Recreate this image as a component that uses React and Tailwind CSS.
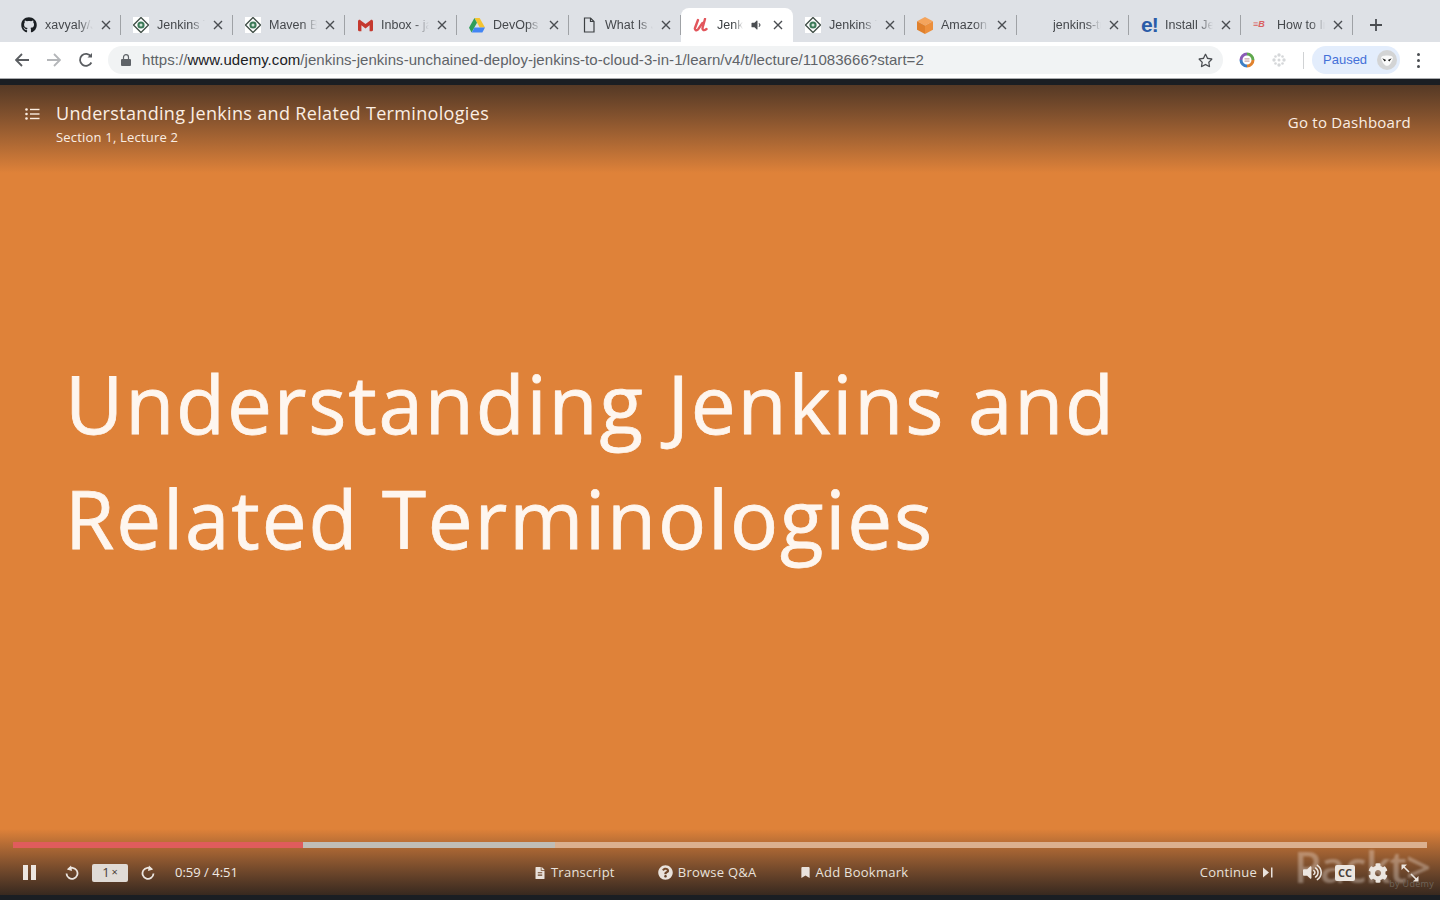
import { FaGithub, FaVolumeDown, FaVolumeUp, FaFileAlt, FaQuestionCircle, FaBookmark, FaCog, FaRegStar } from 'react-icons/fa';
import { SiGmail } from 'react-icons/si';

function JenkinsIcon() {
  return (
    <svg width="16" height="16" viewBox="0 0 16 16" className="bg-white">
      <path d="M8 .5 15.500 8 8 15.500.5 8Z" fill="none" stroke="#44524a" strokeWidth="1.400" />
      <circle cx="8" cy="8" r="3.600" fill="#3d7a58" />
      <circle cx="8" cy="8" r="1.500" fill="#cfe3d6" />
    </svg>
  );
}

function DriveIcon() {
  return (
    <svg width="16" height="15" viewBox="0 0 16 15">
      <path d="M5.400 0h5.200l5.400 9.600h-5.200Z" fill="#f4c430" />
      <path d="M5.400 0 8 4.800 2.600 14.600 0 9.800Z" fill="#2f9e58" />
      <path d="M5.400 9.600H16l-2.600 5H2.800Z" fill="#4285f4" />
    </svg>
  );
}

function PageIcon() {
  return (
    <svg width="16" height="16" viewBox="0 0 16 16" fill="none" stroke="#3c4043" strokeWidth="1.200">
      <path d="M3.500 1h6l3.500 3.500V15h-9.500Z" />
      <path d="M9.500 1v3.500H13" />
    </svg>
  );
}

function UdemyIcon() {
  return (
    <svg width="16" height="14" viewBox="0 0 16 14" fill="none" stroke="#e2565c" strokeWidth="2.400" strokeLinecap="round">
      <path d="M5 2 2 10c-.6 2 1.600 3 3 1.500L9.500 5" />
      <path d="M12 1 9.500 10c-.3 2 1.500 3 4 1" />
    </svg>
  );
}

function AmazonIcon() {
  return (
    <svg width="16" height="17" viewBox="0 0 16 17">
      <path d="M8 0 16 4.200 8 8.400 0 4.200Z" fill="#f4a45c" />
      <path d="M0 4.200 8 8.400V17L0 12.800Z" fill="#e0802c" />
      <path d="M16 4.200 8 8.400V17l8-4.200Z" fill="#ec8f3c" />
    </svg>
  );
}

const tabs = [
  { title: 'xavyaly/Jenkins', icon: <FaGithub size={16} className="text-[#1b1f23]" /> },
  { title: 'Jenkins Tutorial', icon: <JenkinsIcon /> },
  { title: 'Maven Build', icon: <JenkinsIcon /> },
  { title: 'Inbox - jane', icon: <SiGmail size={15} className="text-[#c5392f]" /> },
  { title: 'DevOps Folder', icon: <DriveIcon /> },
  { title: 'What Is Jenkins', icon: <PageIcon /> },
  { title: 'Jenkins Unchained', icon: <UdemyIcon />, active: true },
  { title: 'Jenkins Tutorial', icon: <JenkinsIcon /> },
  { title: 'Amazon Web', icon: <AmazonIcon /> },
  { title: 'jenkins-tutorial', icon: <span className="w-4" /> },
  { title: 'Install Jenkins', icon: <span className="w-4 text-[21px] leading-4 font-bold text-[#2a5ca8] tracking-[-1px]">e!</span> },
  { title: 'How to Install', icon: <span className="w-4 whitespace-nowrap text-[9px] font-bold italic text-[#d9605f]">≡B</span> },
];

function CloseIcon() {
  return (
    <svg width="10" height="10" viewBox="0 0 10 10" stroke="currentColor" strokeWidth="1.400">
      <path d="M1 1l8 8M9 1l-8 8" />
    </svg>
  );
}

function Tab({ tab }) {
  if (tab.active) {
    return (
      <div className="flex h-[34px] w-[112px] items-center rounded-t-lg bg-white pl-3 pr-[10px]">
        {tab.icon}
        <span className="ml-[8px] w-[26px] overflow-hidden whitespace-nowrap text-[12.500px] text-[#3c4043] [mask-image:linear-gradient(to_right,black_65%,transparent)]">
          {tab.title}
        </span>
        <FaVolumeDown size={12} className="ml-[7px] text-[#4a4d51]" />
        <span className="ml-auto text-[#4a4d51]"><CloseIcon /></span>
      </div>
    );
  }
  return (
    <div className="relative flex h-[34px] w-[112px] items-center pl-3 pr-[10px]">
      <span className="flex w-4 shrink-0 justify-center">{tab.icon}</span>
      <span className="ml-[8px] w-[48px] overflow-hidden whitespace-nowrap text-[12.500px] text-[#45484c] [mask-image:linear-gradient(to_right,black_70%,transparent)]">
        {tab.title}
      </span>
      <span className="ml-auto text-[#4a4d51]"><CloseIcon /></span>
      <span className="absolute right-0 top-[7px] h-5 w-px bg-[#9fa2a6]" />
    </div>
  );
}

function ControlLink({ icon, label }) {
  return (
    <div className="flex items-center gap-[5px] text-[13px] font-medium tracking-[.25px] text-[#e9e2dc]">
      {icon}
      <span>{label}</span>
    </div>
  );
}

export default function App() {
  return (
    <div className="flex h-screen w-full flex-col overflow-hidden bg-[#1a1e23] font-['Liberation_Sans',sans-serif]">
      {/* tab strip */}
      <div className="flex h-[42px] items-end bg-[#dee1e6] pl-[9px]">
        {tabs.map((tab, i) => (
          <Tab key={i} tab={tab} />
        ))}
        <svg width="12" height="12" viewBox="0 0 12 12" stroke="#4a4d51" strokeWidth="1.800" className="mb-[11px] ml-[17px]">
          <path d="M6 0v12M0 6h12" />
        </svg>
      </div>

      {/* toolbar */}
      <div className="flex h-[37px] items-center border-b border-[#a9abae] bg-white pl-[15px] pr-4">
        <svg width="14" height="14" viewBox="0 0 14 14" fill="none" stroke="#5a5d61" strokeWidth="1.800">
          <path d="M14 7H1.500M7 1 1 7l6 6" />
        </svg>
        <svg width="14" height="14" viewBox="0 0 14 14" fill="none" stroke="#b4b6b9" strokeWidth="1.800" className="ml-[18px]">
          <path d="M0 7h12.500M7 1l6 6-6 6" />
        </svg>
        <svg width="16" height="16" viewBox="0 0 16 16" fill="none" stroke="#5a5d61" strokeWidth="1.800" className="ml-[17px]">
          <path d="M13.400 10.500A6 6 0 1 1 13 4.500" />
          <path d="M14 1v4.500H9.500" fill="#5a5d61" stroke="none" />
        </svg>
        <div className="ml-[14px] flex h-7 w-[1115px] items-center rounded-full bg-[#f1f3f4] pl-[13px] pr-[10px]">
          <svg width="10" height="12" viewBox="0 0 10 12" fill="#5f6368">
            <rect y="5" width="10" height="7" rx="1" />
            <path d="M2.500 5V3.200a2.500 2.500 0 0 1 5 0V5" fill="none" stroke="#5f6368" strokeWidth="1.200" />
          </svg>
          <span className="ml-[11px] whitespace-nowrap text-[15px] tracking-[.05px] text-[#5f6368]">
            https://<span className="text-[#202124]">www.udemy.com</span>/jenkins-jenkins-unchained-deploy-jenkins-to-cloud-3-in-1/learn/v4/t/lecture/11083666?start=2
          </span>
          <FaRegStar size={15} className="ml-auto text-[#4a4d51]" />
        </div>
        <span className="ml-4 flex h-4 w-4 items-center justify-center">
          <svg width="16" height="16" viewBox="0 0 16 16" fill="none" strokeWidth="3">
            <path d="M2 8a6 6 0 0 1 6-6" stroke="#8a5bb5" />
            <path d="M8 2a6 6 0 0 1 6 6" stroke="#5fa84d" />
            <path d="M14 8a6 6 0 0 1-6 6" stroke="#e0822d" />
            <path d="M8 14a6 6 0 0 1-6-6" stroke="#3f7fc4" />
            <path d="M5.500 6.800h5M5.500 9.200h5" stroke="#c9a6a6" strokeWidth="1.300" />
          </svg>
        </span>
        <svg width="14" height="14" viewBox="0 0 14 14" fill="#d5d7d9" className="ml-[17px]">
          <circle cx="7" cy="2" r="1.700" /><circle cx="7" cy="12" r="1.700" /><circle cx="2" cy="7" r="1.700" /><circle cx="12" cy="7" r="1.700" />
          <circle cx="3.500" cy="3.500" r="1.300" /><circle cx="10.500" cy="3.500" r="1.300" /><circle cx="3.500" cy="10.500" r="1.300" /><circle cx="10.500" cy="10.500" r="1.300" />
          <circle cx="7" cy="7" r="1.500" />
        </svg>
        <span className="ml-[17px] h-[17px] w-px bg-[#d0d2d4]" />
        <div className="ml-2 flex h-7 w-[88px] shrink-0 items-center rounded-full bg-[#e3edfc] pl-[11px]">
          <span className="text-[13px] text-[#4470d8]">Paused</span>
          <span className="ml-[10px] flex h-5 w-5 items-center justify-center rounded-full bg-[#d3d4d5]">
            <svg width="14" height="14" viewBox="0 0 12 12">
              <path d="M1 4c0-2.500 10-2.500 10 0 0 3-3 7-5 7S1 7 1 4Z" fill="#fafafa" />
              <path d="M2 4.500l3.200 1.500-1.200 1.200ZM10 4.500 6.800 6l1.200 1.200Z" fill="#111" />
            </svg>
          </span>
        </div>
        <div className="ml-[17px] flex flex-col gap-[3px]">
          <span className="h-[3px] w-[3px] rounded-full bg-[#4a4d51]" />
          <span className="h-[3px] w-[3px] rounded-full bg-[#4a4d51]" />
          <span className="h-[3px] w-[3px] rounded-full bg-[#4a4d51]" />
        </div>
      </div>

      {/* video */}
      <div className="relative mt-[6px] flex h-[810px] flex-col bg-[#df8239] font-['Open_Sans',sans-serif]">
        <div className="absolute inset-x-0 top-0 flex h-[88px] justify-between bg-linear-to-b from-[#553925] to-[#df8239] pl-[25px] pr-[29px] pt-[16px] text-[#fbeee3]">
          <div className="flex gap-[16px]">
            <svg width="15" height="12" viewBox="0 0 15 12" fill="#fbeee3" className="mt-[7px]">
              <circle cx="1.500" cy="1.500" r="1.300" /><circle cx="1.500" cy="6" r="1.300" /><circle cx="1.500" cy="10.500" r="1.300" />
              <rect x="5" y=".8" width="9.500" height="1.400" /><rect x="5" y="5.300" width="9.500" height="1.400" /><rect x="5" y="9.800" width="9.500" height="1.400" />
            </svg>
            <div>
              <div className="text-lg leading-6 font-medium tracking-[.33px]">Understanding Jenkins and Related Terminologies</div>
              <div className="mt-[3px] text-[13px] leading-[18px] font-medium tracking-[.2px]">Section 1, Lecture 2</div>
            </div>
          </div>
          <div className="mt-[10px] text-[15px] font-medium tracking-[.25px] leading-[22px]">Go to Dashboard</div>
        </div>

        <div className="pl-[65px] pt-[260px] text-[80px] leading-[115px] font-medium tracking-[1.850px] text-[#fef6ef] blur-[.7px] [font-stretch:90%] [-webkit-text-stroke:.8px_#fef6ef]">
          <div>Understanding Jenkins and</div>
          <div>Related Terminologies</div>
        </div>

        <div className="absolute inset-x-0 bottom-0 flex h-[66px] flex-col bg-linear-to-b from-[#df8239] to-[#38291f]">
          {/* watermark sits under the controls */}
          <div className="absolute bottom-[6px] right-[6px] flex w-[140px] flex-col items-end">
            <span className="w-full text-[44px] leading-[46px] font-semibold tracking-[-1px] text-[#f3e9e0]/35 blur-[.8px]">Packt&gt;</span>
            <span className="absolute bottom-[-1px] right-0 text-[9px] tracking-[.3px] text-[#6f6459]">by Udemy</span>
          </div>
          <div className="relative mx-[13px] mt-[13px] flex h-[6px] bg-[#dbb08f]">
            <div className="w-[290px] bg-[#e05c5c]" />
            <div className="w-[252px] bg-[#c0bdb6]" />
          </div>
          <div className="relative flex flex-1 items-center pl-[23px] pr-[21px] pt-[2px]">
            <div className="flex gap-[3px]">
              <span className="h-[15px] w-[5px] bg-[#ece6e0]" />
              <span className="h-[15px] w-[5px] bg-[#ece6e0]" />
            </div>
            <svg width="14" height="15" viewBox="0 0 14 15" fill="none" stroke="#ece6e0" strokeWidth="1.800" className="ml-[29px]">
              <path d="M3 4.500A5.500 5.500 0 1 1 1.500 8.500" />
              <path d="M6 .5 2 4.500l5 1.500Z" fill="#ece6e0" stroke="none" />
            </svg>
            <div className="ml-[13px] flex h-[18px] w-9 items-center justify-center gap-[2px] rounded-[2px] bg-[#e0dbd6] text-[13px] text-[#4a4038]">
              1<span className="text-[11px]">×</span>
            </div>
            <svg width="14" height="15" viewBox="0 0 14 15" fill="none" stroke="#ece6e0" strokeWidth="1.800" className="ml-[13px]">
              <path d="M11 4.500A5.500 5.500 0 1 0 12.500 8.500" />
              <path d="M8 .5l4 4-5 1.500Z" fill="#ece6e0" stroke="none" />
            </svg>
            <span className="ml-[20px] text-[13px] font-medium text-[#f0e9e3]">0:59 / 4:51</span>

            <div className="ml-[296px] flex items-center gap-[43px]">
              <ControlLink icon={<FaFileAlt size={12} />} label="Transcript" />
              <ControlLink icon={<FaQuestionCircle size={15} />} label="Browse Q&A" />
              <ControlLink icon={<FaBookmark size={11} />} label="Add Bookmark" />
            </div>

            <div className="ml-auto flex items-center">
              <span className="text-[13px] font-medium tracking-[.25px] text-[#e9e2dc]">Continue</span>
              <svg width="10" height="11" viewBox="0 0 10 11" fill="#e9e2dc" className="ml-[6px]">
                <path d="M0 .5v10l6-5Z" /><rect x="8" y=".5" width="1.500" height="10" />
              </svg>
              <FaVolumeUp size={19} className="ml-[30px] text-[#ece6e0]" />
              <div className="ml-[13px] flex h-4 w-[20px] items-center justify-center rounded-[2px] bg-[#ece6e0] text-[11px] font-bold leading-none text-[#4a4038]">CC</div>
              <FaCog size={20} className="ml-[13px] text-[#ece6e0]" />
              <svg width="18" height="18" viewBox="0 0 18 18" fill="none" stroke="#ece6e0" strokeWidth="1.600" className="ml-[13px]">
                <path d="M1.500 1.500l6.500 6.500M10 10l6.500 6.500" />
                <path d="M.5.5h5.500L.5 6ZM17.500 17.500H12l5.500-5.500Z" fill="#ece6e0" stroke="none" />
              </svg>
            </div>
          </div>
        </div>
      </div>
    </div>
  );
}
